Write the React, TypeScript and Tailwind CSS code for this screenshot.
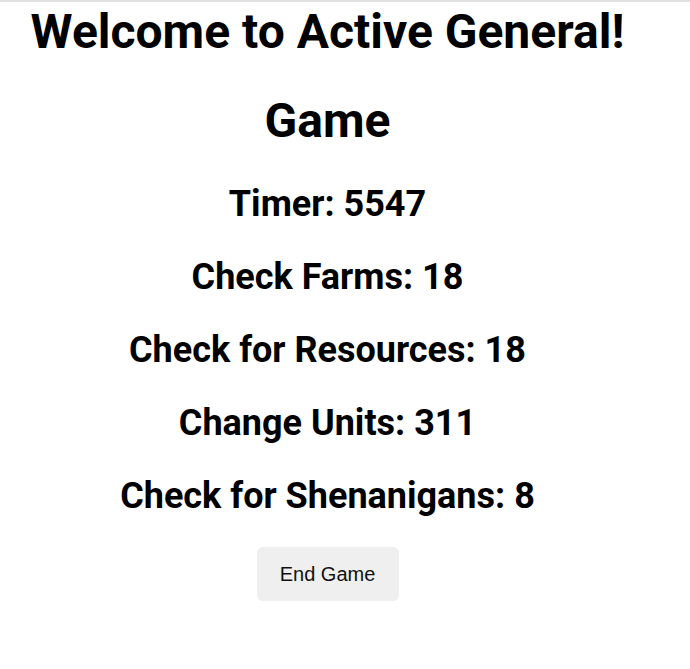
import React from "react";

const stats = [
  { label: "Timer", value: 5547 },
  { label: "Check Farms", value: 18 },
  { label: "Check for Resources", value: 18 },
  { label: "Change Units", value: 311 },
  { label: "Check for Shenanigans", value: 8 },
];

const App = () => {
  return (
    <div className="min-h-[669px] border-t-2 border-[#e0e0e0] bg-white font-['Roboto',sans-serif] text-black">
      <div className="w-[655px] flex flex-col items-center">
        <h1 className="mt-[2px] text-[48px] leading-[56px] font-bold whitespace-nowrap">
          Welcome to Active General!
        </h1>
        <h1 className="mt-[33px] text-[48px] leading-[56px] font-bold">Game</h1>
        <div className="mt-[34px] flex flex-col items-center gap-[31px]">
          {stats.map((s) => (
            <h2 key={s.label} className="text-[36px] leading-[42px] font-bold">
              {s.label}: {s.value}
            </h2>
          ))}
        </div>
        <button className="mt-[30px] w-[142px] h-[54px] rounded-md bg-[#efefef] font-['Liberation_Sans',Arial,sans-serif] text-[20px] text-[#111]">
          End Game
        </button>
      </div>
    </div>
  );
};

export default App;
